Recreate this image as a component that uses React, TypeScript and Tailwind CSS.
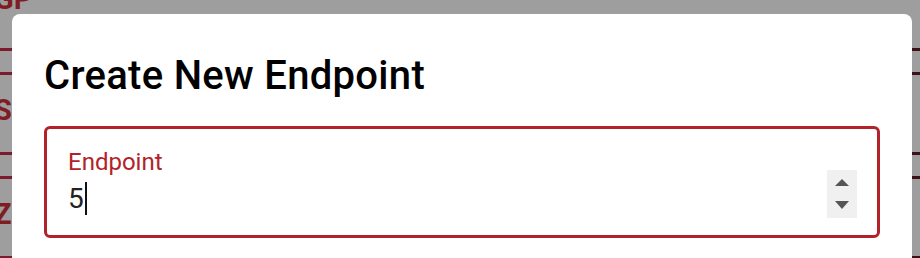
import React from "react";

const Line = () => (
  <div className="flex h-[3px] w-full bg-[#7d1a2d]">
    <div className="ml-auto h-full w-[460px] bg-[#3d0f16]" />
  </div>
);

const Letter = ({ text }: { text: string }) => (
  <div className="flex h-[77px] items-end pb-[27px]">
    <span className="-ml-[6px] text-[29px] font-bold leading-none text-[#7f1d24]">{text}</span>
  </div>
);

function Backdrop() {
  return (
    <div className="flex w-full flex-col">
      <div className="flex h-[48px] flex-col justify-end overflow-hidden pb-[34px]">
        <span className="-ml-[6px] text-[29px] font-bold leading-none text-[#7f1d24]">GP</span>
      </div>
      <Line />
      <div className="h-[21px]" />
      <Line />
      <Letter text="S" />
      <Line />
      <div className="h-[21px]" />
      <Line />
      <Letter text="Z" />
      <Line />
    </div>
  );
}

function Spinner() {
  return (
    <div className="mt-[41px] flex h-[48px] w-[30px] flex-col items-center bg-[#f0f0f0]">
      <svg width="14" height="7" viewBox="0 0 14 7" className="mt-[9px]">
        <path d="M7 0 L14 7 L0 7 Z" fill="#555" />
      </svg>
      <svg width="14" height="8" viewBox="0 0 14 8" className="mt-[15px]">
        <path d="M0 0 L14 0 L7 8 Z" fill="#555" />
      </svg>
    </div>
  );
}

export default function App() {
  return (
    <div className="relative h-[258px] w-[920px] overflow-hidden bg-[#9e9e9e] font-['Roboto',sans-serif]">
      <Backdrop />
      <div className="absolute left-[12px] top-[14px] h-[300px] w-[900px] rounded-lg bg-white px-8 pt-[38px]">
        <h2 className="text-[40px] font-medium leading-[48px] tracking-[0.3px] text-black">Create New Endpoint</h2>
        <div className="mt-[26px] flex h-[112px] rounded-md border-[3px] border-[#b3222a] pl-[21px] pr-[20px]">
          <div className="flex flex-1 flex-col pt-[19px]">
            <label className="text-[24px] leading-[28px] text-[#b3222a]">Endpoint</label>
            <div className="mt-[6px] flex items-center text-[28px] leading-[32px] text-[#222]">
              5<span className="ml-[1px] inline-block h-[33px] w-[2px] bg-[#111]" />
            </div>
          </div>
          <Spinner />
        </div>
      </div>
    </div>
  );
}
